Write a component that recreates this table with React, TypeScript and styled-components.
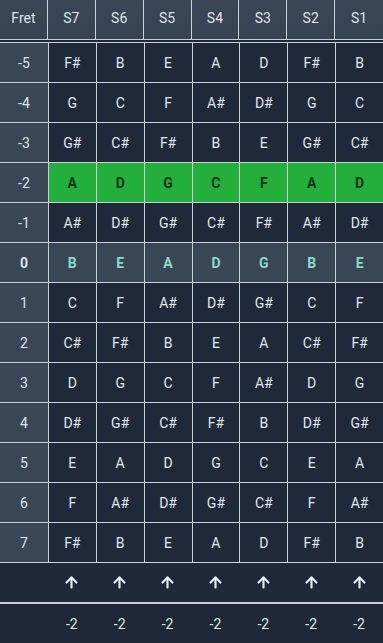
import React from 'react'
import styled, { createGlobalStyle, css } from 'styled-components'
import { ArrowUp } from 'lucide-react'

const GlobalStyle = createGlobalStyle`
    html, body {
        margin: 0;
        padding: 0;
        background: #1e2838;
    }
    body {
        font-family: Roboto, "Liberation Sans", sans-serif;
    }
`

const LINE = '#c9d0da'

const Page = styled.div`
    width: 383px;
    height: 643px;
    overflow: hidden;
    background: #1e2838;
    color: #e3e7ee;
`

const HeaderRow = styled.div`
    display: grid;
    grid-template-columns: repeat(8, 1fr);
    height: 39px;
    border-bottom: 1px solid ${LINE};
    margin-bottom: 2px;
    background: linear-gradient(#3b4657, #364152);
`

const HeadCell = styled.div`
    display: flex;
    align-items: center;
    justify-content: center;
    padding-bottom: 4px;
    font-size: 14px;
    color: #dfe3ea;
    border-right: 1px solid ${LINE};
    &:last-child{
        border-right: none;
    }
`

type RowKind = 'normal' | 'target' | 'open'

const BodyRow = styled.div`
    display: grid;
    grid-template-columns: repeat(8, 1fr);
    height: 39px;
    border-top: 1px solid ${LINE};
`

const FretCell = styled.div<{ $kind: RowKind }>`
    display: flex;
    align-items: center;
    justify-content: center;
    font-size: 14px;
    color: #dde2e9;
    background: #3a4556;
    font-weight: ${p => (p.$kind === 'open' ? 700 : 400)};
`

const NoteCell = styled.div<{ $kind: RowKind }>`
    display: flex;
    align-items: center;
    justify-content: center;
    font-size: 14px;
    border-left: 1px solid ${LINE};
    background: #1f293a;
    color: #e3e7ee;
    ${p => p.$kind === 'target' && css`
        background: #24ae3c;
        color: #0c3512;
        font-weight: 700;
    `}
    ${p => p.$kind === 'open' && css`
        background: #3a4556;
        color: #86dcc8;
        font-weight: 700;
    `}
`

const FootRow = styled.div<{ $top?: boolean }>`
    display: grid;
    grid-template-columns: repeat(8, 1fr);
    height: 39px;
    border-top: ${p => (p.$top ? 2 : 1)}px solid ${LINE};
`

const FootCell = styled.div`
    display: flex;
    align-items: center;
    justify-content: center;
    font-size: 14px;
    color: #e3e7ee;
`

const strings = ['S7', 'S6', 'S5', 'S4', 'S3', 'S2', 'S1']

const rows: { fret: number; notes: string[] }[] = [
    { fret: -5, notes: ['F#', 'B', 'E', 'A', 'D', 'F#', 'B'] },
    { fret: -4, notes: ['G', 'C', 'F', 'A#', 'D#', 'G', 'C'] },
    { fret: -3, notes: ['G#', 'C#', 'F#', 'B', 'E', 'G#', 'C#'] },
    { fret: -2, notes: ['A', 'D', 'G', 'C', 'F', 'A', 'D'] },
    { fret: -1, notes: ['A#', 'D#', 'G#', 'C#', 'F#', 'A#', 'D#'] },
    { fret: 0, notes: ['B', 'E', 'A', 'D', 'G', 'B', 'E'] },
    { fret: 1, notes: ['C', 'F', 'A#', 'D#', 'G#', 'C', 'F'] },
    { fret: 2, notes: ['C#', 'F#', 'B', 'E', 'A', 'C#', 'F#'] },
    { fret: 3, notes: ['D', 'G', 'C', 'F', 'A#', 'D', 'G'] },
    { fret: 4, notes: ['D#', 'G#', 'C#', 'F#', 'B', 'D#', 'G#'] },
    { fret: 5, notes: ['E', 'A', 'D', 'G', 'C', 'E', 'A'] },
    { fret: 6, notes: ['F', 'A#', 'D#', 'G#', 'C#', 'F', 'A#'] },
    { fret: 7, notes: ['F#', 'B', 'E', 'A', 'D', 'F#', 'B'] },
]

const target = -2

const App: React.FC = () => {
    return (
        <Page>
            <GlobalStyle />
            <HeaderRow>
                <HeadCell>Fret</HeadCell>
                {strings.map(s => <HeadCell key={s}>{s}</HeadCell>)}
            </HeaderRow>
            {
                rows.map(r => {
                    const kind: RowKind = r.fret === target ? 'target' : r.fret === 0 ? 'open' : 'normal'
                    return (
                        <BodyRow key={r.fret}>
                            <FretCell $kind={kind}>{r.fret}</FretCell>
                            {r.notes.map((n, i) => <NoteCell key={i} $kind={kind}>{n}</NoteCell>)}
                        </BodyRow>
                    )
                })
            }
            <FootRow>
                <FootCell />
                {strings.map(s => (
                    <FootCell key={s}><ArrowUp size={17} strokeWidth={3} color="#eef1f5" /></FootCell>
                ))}
            </FootRow>
            <FootRow $top>
                <FootCell />
                {strings.map(s => <FootCell key={s}>{target}</FootCell>)}
            </FootRow>
        </Page>
    )
}

export default App
